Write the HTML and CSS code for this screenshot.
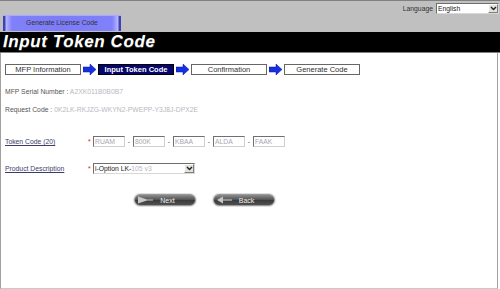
FILE: index.html
```html
<!DOCTYPE html>
<html lang="en">

<head>
    <meta charset="UTF-8">
    <meta name="viewport" content="width=device-width, initial-scale=1.0">
    <title>Input Token Code</title>
    <link rel="stylesheet" href="styles.css">
</head>

<body>
    <div class="topbar">
        <div class="tab">Generate License Code</div>
        <div class="lang">
            <span class="lang-label">Language</span>
            <div class="combo combo-lang">
                <span class="combo-text">English</span>
                <span class="combo-btn">
                    <svg width="7" height="5" viewBox="0 0 7 5"><path d="M1 1 L3.5 3.5 L6 1" fill="none" stroke="#222" stroke-width="1.4"/></svg>
                </span>
            </div>
        </div>
    </div>

    <div class="title">Input Token Code</div>

    <div class="main">
        <div class="steps">
            <div class="step">MFP Information</div>
            <svg class="arrow" width="13" height="11" viewBox="0 0 13 11"><polygon points="0,3 7,3 7,0 13,5.5 7,11 7,8 0,8" fill="#1530e0" stroke="#0b1aa0" stroke-width="0.5"/></svg>
            <div class="step step-active">Input Token Code</div>
            <svg class="arrow" width="13" height="11" viewBox="0 0 13 11"><polygon points="0,3 7,3 7,0 13,5.5 7,11 7,8 0,8" fill="#1530e0" stroke="#0b1aa0" stroke-width="0.5"/></svg>
            <div class="step">Confirmation</div>
            <svg class="arrow" width="13" height="11" viewBox="0 0 13 11"><polygon points="0,3 7,3 7,0 13,5.5 7,11 7,8 0,8" fill="#1530e0" stroke="#0b1aa0" stroke-width="0.5"/></svg>
            <div class="step">Generate Code</div>
        </div>

        <div class="info info-serial">MFP Serial Number : <span class="value">A2XK011B0B0B7</span></div>
        <div class="info info-request">Request Code : <span class="value">0K2LK-RKJZG-WKYN2-PWEPP-Y3J8J-DPX2E</span></div>

        <div class="field field-token">
            <span class="label">Token Code (20)</span>
            <span class="req">*</span>
            <input class="code" type="text" value="RUAM">
            <span class="dash">-</span>
            <input class="code" type="text" value="800K">
            <span class="dash">-</span>
            <input class="code" type="text" value="KBAA">
            <span class="dash">-</span>
            <input class="code" type="text" value="ALDA">
            <span class="dash">-</span>
            <input class="code" type="text" value="FAAK">
        </div>

        <div class="field field-product">
            <span class="label">Product Description</span>
            <span class="req">*</span>
            <div class="combo combo-product">
                <span class="combo-text">i-Option LK-<span class="value">105 v3</span></span>
                <span class="combo-btn">
                    <svg width="7" height="5" viewBox="0 0 7 5"><path d="M1 1 L3.5 3.5 L6 1" fill="none" stroke="#222" stroke-width="1.4"/></svg>
                </span>
            </div>
        </div>

        <div class="actions">
            <button class="pill">
                <svg class="pill-icon" width="16" height="8" viewBox="0 0 16 8"><polygon points="0,0.5 9,3.5 15,3.5 15,4.5 9,4.5 0,7.5" fill="#c8c8c8"/></svg>
                <span>Next</span>
            </button>
            <button class="pill">
                <svg class="pill-icon" width="16" height="8" viewBox="0 0 16 8"><polygon points="6,0.5 0,4 6,7.5" fill="#c8c8c8"/><rect x="6" y="3.3" width="9" height="1.4" fill="#b0b0b0"/></svg>
                <span>Back</span>
            </button>
        </div>
    </div>
</body>

</html>
```

FILE: styles.css
```css
* {
    box-sizing: border-box;
}

body {
    margin: 0;
    width: 500px;
    height: 289px;
    background-color: white;
    font-family: "Liberation Sans", Arial, sans-serif;
    font-size: 6.8px;
    color: #555;
    overflow: hidden;
}

.topbar {
    height: 32px;
    display: flex;
    justify-content: space-between;
    background-color: #c0c0c0;
    border-top: 1px solid #808080;
    padding: 0 1px 0 3px;
}

.tab {
    align-self: flex-end;
    width: 118px;
    height: 16px;
    margin-bottom: 1px;
    line-height: 16px;
    text-align: center;
    color: #333;
    background: linear-gradient(to right, #4040b8 0, #4040b8 2px, #b8b8ff 3px, #9a9aff 6px, #8080fa 9px, #7c7cf8 50%, #8080fa calc(100% - 9px), #9a9aff calc(100% - 6px), #b8b8ff calc(100% - 3px), #4040b8 calc(100% - 2px));
    box-shadow: inset 0 1px 0 #a8a8ff;
}

.lang {
    align-self: flex-start;
    display: flex;
    align-items: center;
    gap: 3px;
    margin-top: 2px;
}

.lang-label {
    color: #333;
}

.combo {
    display: flex;
    height: 11px;
    background-color: white;
    border: 1px solid;
    border-color: #6f6f6f #d8d8d8 #d8d8d8 #6f6f6f;
    color: #222;
}

.combo-lang {
    width: 63px;
}

.combo-product {
    width: 102px;
}

.combo-text {
    flex: 1;
    line-height: 9px;
    padding-left: 1px;
    white-space: nowrap;
    overflow: hidden;
}

.combo-btn {
    width: 10px;
    display: flex;
    align-items: center;
    justify-content: center;
    background-color: #e4e2dc;
    border: 1px solid;
    border-color: #fff #808080 #808080 #fff;
}

.title {
    height: 21px;
    background-color: black;
    border-bottom: 1px solid #808080;
    color: white;
    font-size: 17px;
    font-weight: bold;
    font-style: italic;
    letter-spacing: 0.6px;
    line-height: 20px;
    padding-left: 3px;
    text-shadow: 0 1px 0 #444;
}

.main {
    width: 498px;
    height: 236px;
    border-left: 1px solid #a0a0a0;
    border-right: 1px solid #a0a0a0;
    border-bottom: 1px solid #c8c8c8;
    padding-left: 4px;
    display: flex;
    flex-direction: column;
}

.steps {
    display: flex;
    align-items: center;
    gap: 2px;
    margin-top: 11px;
}

.step {
    width: 76px;
    height: 11px;
    line-height: 9px;
    border: 1px solid #666;
    text-align: center;
    font-size: 7.5px;
    color: #333;
}

.step-active {
    background-color: #06066e;
    border-color: #000;
    color: white;
    font-weight: bold;
}

.info {
    line-height: 12px;
}

.info-serial {
    margin-top: 11px;
}

.info-request {
    margin-top: 6px;
}

.value {
    color: #b8b8c0;
}

.field {
    display: flex;
    align-items: center;
    height: 11px;
}

.field-token {
    margin-top: 20px;
}

.field-product {
    margin-top: 16px;
}

.label {
    width: 83px;
    color: #3c3c6c;
    text-decoration: underline;
}

.req {
    width: 5px;
    color: #e02020;
}

.code {
    width: 32px;
    height: 11px;
    margin: 0;
    padding: 0 1px;
    border: 1px solid;
    border-color: #707070 #d0d0d0 #d0d0d0 #707070;
    font: 6.8px "Liberation Sans", Arial, sans-serif;
    color: #a8a8b0;
    outline: none;
}

.dash {
    width: 8px;
    text-align: center;
}

.actions {
    display: flex;
    gap: 17px;
    margin-top: 20px;
    margin-left: 129px;
}

.pill {
    width: 62px;
    height: 12px;
    padding: 0 0 0 3px;
    display: flex;
    align-items: center;
    border: 1px solid #9a9a9a;
    border-radius: 6px;
    background: linear-gradient(#8c8c8c, #555 45%, #3c3c3c 55%, #505050);
    box-shadow: 0 0 0 1px #e0e0e0;
    color: #eee;
    font: 7px "Liberation Sans", Arial, sans-serif;
    cursor: pointer;
}

.pill span {
    flex: 1;
    text-align: center;
    padding-right: 14px;
}
```
